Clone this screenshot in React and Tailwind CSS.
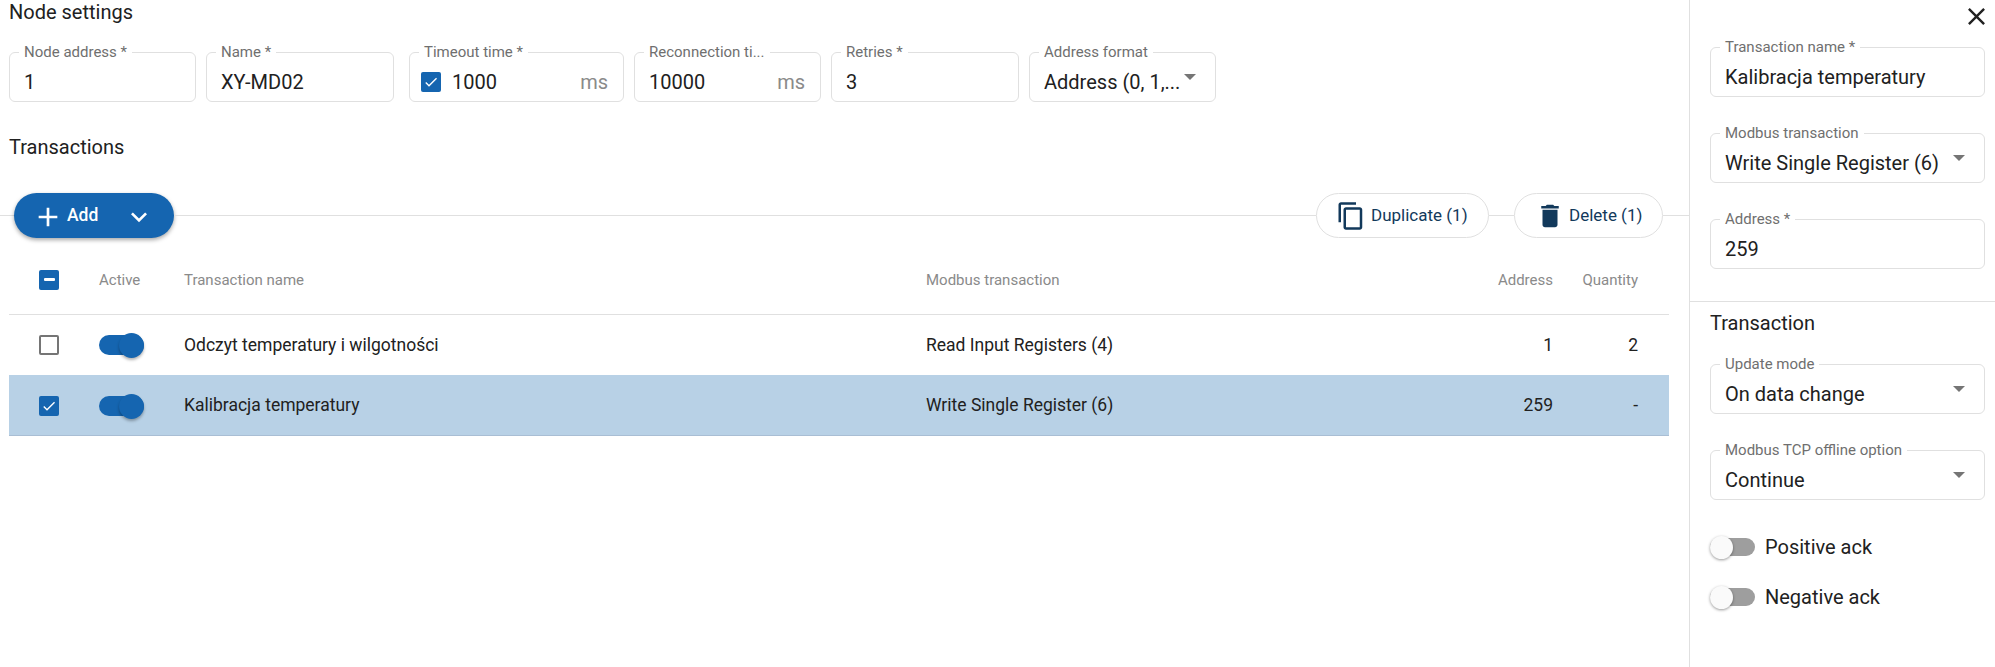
const ICONS = {
  copy: 'M16 1H4c-1.1 0-2 .9-2 2v14h2V3h12V1zm3 4H8c-1.1 0-2 .9-2 2v14c0 1.1.9 2 2 2h11c1.1 0 2-.9 2-2V7c0-1.1-.9-2-2-2zm0 16H8V7h11v14z',
  trash: 'M6 19c0 1.1.9 2 2 2h8c1.1 0 2-.9 2-2V7H6v12zM19 4h-3.5l-1-1h-5l-1 1H5v2h14V4z',
  close: 'M19 6.41L17.59 5 12 10.59 6.41 5 5 6.41 10.59 12 5 17.59 6.41 19 12 13.41 17.59 19 19 17.59 13.41 12 19 6.41z',
  plus: 'M19 13h-6v6h-2v-6H5v-2h6V5h2v6h6v2z',
  chevron: 'M16.59 8.59L12 13.17 7.41 8.59 6 10l6 6 6-6z',
  check: 'M9 16.17 4.83 12l-1.42 1.41L9 19 21 7l-1.41-1.41z',
}

function Icon({ name, className }) {
  return (
    <svg viewBox="0 0 24 24" fill="currentColor" className={className}>
      <path d={ICONS[name]} />
    </svg>
  )
}

function Arrow() {
  return <span className="mr-[4px] h-0 w-0 shrink-0 -translate-y-[5px] border-x-[6px] border-t-[6px] border-x-transparent border-t-[#757575]" />
}

function Checkbox({ state, className = '' }) {
  if (!state) {
    return <span className={`block h-5 w-5 shrink-0 rounded-[2px] border-2 border-[#757575] ${className}`} />
  }
  return (
    <span className={`flex h-5 w-5 shrink-0 items-center justify-center rounded-[2px] bg-[#1565b0] ${className}`}>
      {state === 'mixed' ? (
        <span className="h-[3px] w-[11px] rounded-[1px] bg-white" />
      ) : (
        <Icon name="check" className="h-4 w-4 text-white" />
      )}
    </span>
  )
}

function Field({ label, value, unit, select, checked, className = '' }) {
  return (
    <div className={`relative flex h-[50px] items-center rounded-[6px] border border-[#e0e0e0] pt-[10px] pr-[15px] pl-[14px] ${className}`}>
      <span className="absolute -top-[11px] left-[9px] bg-white px-[5px] text-[15px] leading-[20px] whitespace-nowrap text-[#6f6f6f]">
        {label}
      </span>
      {checked && <Checkbox state="checked" className="mr-[11px] -ml-[3px]" />}
      <span className="flex-1 truncate text-[20px] leading-6 text-[#212121]">{value}</span>
      {unit && <span className="text-[20px] leading-6 text-[#8a8a8a]">{unit}</span>}
      {select && <Arrow />}
    </div>
  )
}

function Switch({ on }) {
  if (on) {
    return (
      <span className="relative block h-[20px] w-[45px] rounded-full bg-[#1565b0]">
        <span className="absolute -top-[2px] right-0 h-[25px] w-[25px] rounded-full bg-[#1565b0] shadow-[0_2px_3px_rgba(0,0,0,0.3)]" />
      </span>
    )
  }
  return (
    <span className="relative block h-[18px] w-[45px] rounded-full bg-[#9e9e9e]">
      <span className="absolute -top-[2.5px] left-0 h-[23px] w-[23px] rounded-full bg-[#fafafa] shadow-[0_1px_3px_rgba(0,0,0,0.4)]" />
    </span>
  )
}

function OutlineButton({ icon, iconClass, children, className = '' }) {
  return (
    <button type="button" className={`flex h-[45px] items-center rounded-full border border-[#e0e0e0] bg-white text-[17px] text-[#12395b] ${className}`}>
      <Icon name={icon} className={iconClass} />
      <span className="mt-[1px]">{children}</span>
    </button>
  )
}

function Line() {
  return <span className="h-px flex-1 bg-[#e0e0e0]" />
}

const COLS = 'grid grid-cols-[60px_85px_742px_1fr_85px_85px] items-center pr-[31px] pl-[30px]'

const ROWS = [
  { name: 'Odczyt temperatury i wilgotności', type: 'Read Input Registers (4)', address: '1', quantity: '2' },
  { name: 'Kalibracja temperatury', type: 'Write Single Register (6)', address: '259', quantity: '-', selected: true },
]

export default function App() {
  return (
    <div className="flex h-[667px] w-[1995px] overflow-hidden bg-white font-['Roboto',sans-serif] text-[#212121]">
      <main className="flex-1">
        <h2 className="pl-[9px] text-[20px] leading-[24px] font-normal">Node settings</h2>

        <div className="mt-[28px] flex pl-[9px]">
          <Field label="Node address *" value="1" className="w-[187px]" />
          <Field label="Name *" value="XY-MD02" className="ml-[10px] w-[188px]" />
          <Field label="Timeout time *" value="1000" unit="ms" checked className="ml-[15px] w-[215px]" />
          <Field label="Reconnection ti..." value="10000" unit="ms" className="ml-[10px] w-[187px]" />
          <Field label="Retries *" value="3" className="ml-[10px] w-[188px]" />
          <Field label="Address format" value="Address (0, 1,..." select className="ml-[10px] w-[187px]" />
        </div>

        <h2 className="mt-[33px] pl-[9px] text-[20px] leading-[24px] font-normal">Transactions</h2>

        <div className="mt-[34px] flex h-[45px] items-center">
          <span className="h-px w-[14px] bg-[#e0e0e0]" />
          <button type="button" className="flex h-[45px] w-[160px] items-center rounded-full bg-[#1565b0] pl-[18px] text-[17.5px] font-medium text-white shadow-[0_2px_4px_rgba(0,0,0,0.35)]">
            <Icon name="plus" className="mt-[3px] h-8 w-8 shrink-0" />
            <span className="ml-[3px]">Add</span>
            <Icon name="chevron" className="mt-[3px] ml-[25px] h-8 w-8 shrink-0" />
          </button>
          <Line />
          <OutlineButton icon="copy" iconClass="ml-[19px] mr-[5px] h-[30px] w-[30px]" className="w-[173px]">
            Duplicate (1)
          </OutlineButton>
          <span className="h-px w-[25px] bg-[#e0e0e0]" />
          <OutlineButton icon="trash" iconClass="ml-[20px] mr-[4px] h-[30px] w-[30px]" className="w-[149px]">
            Delete (1)
          </OutlineButton>
          <span className="h-px w-[26px] bg-[#e0e0e0]" />
        </div>

        <div className="mr-[20px] ml-[9px]">
          <div className={`${COLS} mt-[7px] h-[70px] border-b border-[#e0e0e0] text-[15px] text-[#8a8a8a]`}>
            <Checkbox state="mixed" />
            <span className="mt-[1px]">Active</span>
            <span className="mt-[1px]">Transaction name</span>
            <span className="mt-[1px]">Modbus transaction</span>
            <span className="mt-[1px] text-right">Address</span>
            <span className="mt-[1px] text-right">Quantity</span>
          </div>
          {ROWS.map((row) => (
            <div
              key={row.name}
              className={`${COLS} text-[17.5px] ${row.selected ? 'h-[61px] border-b border-[#a9bed4] bg-[#b8d1e6] pt-[1px]' : 'h-[60px]'}`}
            >
              <Checkbox state={row.selected ? 'checked' : null} />
              <Switch on />
              <span>{row.name}</span>
              <span>{row.type}</span>
              <span className="text-right">{row.address}</span>
              <span className="text-right">{row.quantity}</span>
            </div>
          ))}
        </div>
      </main>

      <aside className="w-[306px] shrink-0 border-l border-[#e0e0e0]">
        <div className="flex h-[47px] justify-end pt-[2px] pr-[4px]">
          <Icon name="close" className="h-[29px] w-[29px]" />
        </div>
        <div className="flex flex-col gap-[36px] pr-[10px] pl-[20px]">
          <Field label="Transaction name *" value="Kalibracja temperatury" />
          <Field label="Modbus transaction" value="Write Single Register (6)" select />
          <Field label="Address *" value="259" />
        </div>
        <div className="mt-[32px] border-t border-[#e0e0e0] pr-[10px] pl-[20px]">
          <h3 className="mt-[9px] text-[20px] leading-6 font-normal">Transaction</h3>
          <div className="mt-[29px] flex flex-col gap-[36px]">
            <Field label="Update mode" value="On data change" select />
            <Field label="Modbus TCP offline option" value="Continue" select />
          </div>
          <div className="mt-[35px] flex flex-col gap-[26px]">
            {['Positive ack', 'Negative ack'].map((label) => (
              <div key={label} className="flex h-[24px] items-center gap-[10px]">
                <Switch />
                <span className="text-[20px] text-[#212121]">{label}</span>
              </div>
            ))}
          </div>
        </div>
      </aside>
    </div>
  )
}
